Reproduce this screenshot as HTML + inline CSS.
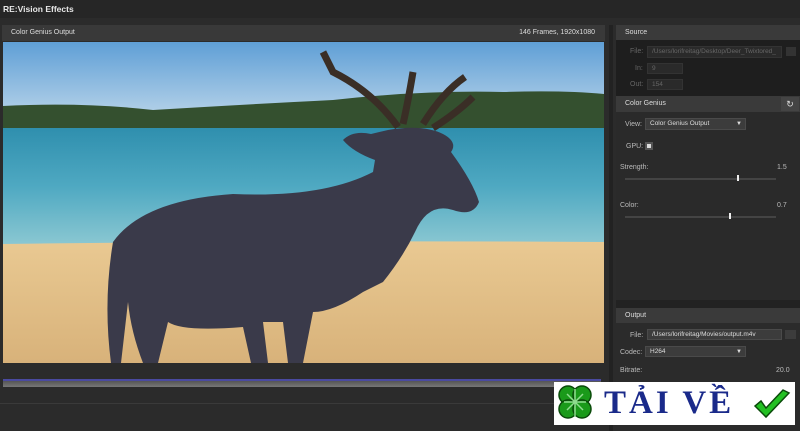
<!DOCTYPE html><html><head><style>
*{margin:0;padding:0;box-sizing:border-box}
body{width:800px;height:431px;background:#2b2b2b;font-family:"Liberation Sans",sans-serif;position:relative;overflow:hidden;color:#ccc;font-size:7px}
.a{position:absolute}
.hdr{background:#3a3a3a;color:#ddd;font-size:7px;padding-left:9px;line-height:15px}
.fld{background:#3c3c3c;border:1px solid #4a4a4a;color:#ddd;font-size:6.5px;line-height:10px;padding-left:4px}
.lbl{color:#bbb;font-size:7px}
</style></head><body>
<div class="a" style="left:0;top:0;width:800px;height:18px;background:#262626"></div>
<div class="a" style="left:3px;top:4px;font-weight:bold;font-size:8.5px;color:#e8e8e8">RE:Vision Effects</div>
<div class="a hdr" style="left:2px;top:25px;width:603px;height:16px;background:#393939">Color Genius Output<span style="float:right;padding-right:10px">146 Frames, 1920x1080</span></div>
<svg class="a" style="left:3px;top:42px" width="601" height="321" viewBox="0 0 601 321">
<defs><linearGradient id="s" x1="0" y1="0" x2="0" y2="1"><stop offset="0" stop-color="#5f9fd6"/><stop offset="1" stop-color="#bcd6ea"/></linearGradient>
<linearGradient id="w" x1="0" y1="0" x2="0" y2="1"><stop offset="0" stop-color="#2f8fae"/><stop offset="0.5" stop-color="#4fa9c2"/><stop offset="1" stop-color="#8cc8d2"/></linearGradient>
<linearGradient id="d" x1="0" y1="0" x2="0" y2="1"><stop offset="0" stop-color="#e9c992"/><stop offset="1" stop-color="#d8b27a"/></linearGradient></defs>
<rect width="601" height="80" fill="url(#s)"/>
<path d="M0 64 Q80 60 150 68 Q250 62 330 58 Q420 48 500 50 Q560 48 601 52 L601 88 L0 88Z" fill="#34502f"/>
<rect y="86" width="601" height="118" fill="url(#w)"/>
<path d="M0 202 Q300 198 601 200 L601 321 L0 321Z" fill="url(#d)"/>
<path d="M110 200 Q140 158 230 152 Q320 156 370 130 L372 118 Q350 110 340 98 Q350 88 368 92 L385 88 Q420 82 440 92 Q455 100 448 110 Q470 140 476 160 Q470 175 450 168 Q425 160 412 190 Q400 215 380 240 L360 250 Q330 270 310 270 L300 321 L285 321 L280 280 L260 280 L265 321 L248 321 L240 285 Q180 290 165 280 L155 321 L140 321 Q128 290 125 260 L118 321 L108 321 Q100 260 110 200Z" fill="#3a3a4a"/>
<path d="M395 85 Q370 50 330 30 L320 10 M400 82 Q405 60 410 30 M420 82 Q440 50 462 35 M430 86 Q455 70 470 55" stroke="#3a2e26" stroke-width="7" fill="none"/>
</svg>
<div class="a" style="left:3px;top:379px;width:598px;height:8px;background:linear-gradient(#555,#777);border-top:2px solid #4a4aa0"></div>
<div class="a" style="left:0;top:403px;width:600px;height:1px;background:#3a3a3a"></div>
<div class="a" style="left:609px;top:25px;width:4px;height:406px;background:#222"></div>
<div class="a hdr" style="left:616px;top:25px;width:184px;height:15px">Source</div>
<div class="a" style="left:616px;top:40px;width:184px;height:56px;background:#1e1e1e"></div>
<div class="a lbl" style="left:630px;top:48px;color:#666">File:</div>
<div class="a fld" style="left:647px;top:46px;width:135px;height:12px;background:#2a2a2a;border-color:#333;color:#666">/Users/lorifreitag/Desktop/Deer_Twixtored_</div>
<div class="a" style="left:786px;top:47px;width:10px;height:9px;background:#333"></div>
<div class="a lbl" style="left:635px;top:65px;color:#666">In:</div>
<div class="a fld" style="left:647px;top:63px;width:36px;height:11px;background:#2a2a2a;border-color:#333;color:#666">9</div>
<div class="a lbl" style="left:630px;top:81px;color:#666">Out:</div>
<div class="a fld" style="left:647px;top:79px;width:36px;height:11px;background:#2a2a2a;border-color:#333;color:#666">154</div>
<div class="a hdr" style="left:616px;top:96px;width:184px;height:16px">Color Genius</div>
<div class="a" style="left:781px;top:97px;width:18px;height:14px;background:#444;color:#ddd;font-size:9px;text-align:center;line-height:14px">↻</div>
<div class="a" style="left:616px;top:112px;width:184px;height:196px;background:#2a2a2a"></div>
<div class="a lbl" style="left:625px;top:121px">View:</div>
<div class="a fld" style="left:645px;top:118px;width:101px;height:12px">Color Genius Output<span style="float:right;padding-right:3px;font-size:6px">▼</span></div>
<div class="a lbl" style="left:626px;top:143px">GPU:</div>
<div class="a" style="left:645px;top:142px;width:8px;height:8px;background:#ddd;border:2px solid #555"></div>
<div class="a lbl" style="left:620px;top:164px">Strength:</div><div class="a lbl" style="left:777px;top:164px">1.5</div>
<div class="a" style="left:625px;top:178px;width:151px;height:2px;background:#444"></div>
<div class="a" style="left:737px;top:175px;width:2px;height:6px;background:#eee"></div>
<div class="a lbl" style="left:620px;top:202px">Color:</div><div class="a lbl" style="left:777px;top:202px">0.7</div>
<div class="a" style="left:625px;top:216px;width:151px;height:2px;background:#444"></div>
<div class="a" style="left:729px;top:213px;width:2px;height:6px;background:#eee"></div>
<div class="a" style="left:616px;top:300px;width:184px;height:8px;background:#222"></div>
<div class="a hdr" style="left:616px;top:308px;width:184px;height:15px">Output</div>
<div class="a lbl" style="left:630px;top:332px">File:</div>
<div class="a fld" style="left:647px;top:329px;width:135px;height:11px">/Users/lorifreitag/Movies/output.m4v</div>
<div class="a" style="left:785px;top:330px;width:11px;height:9px;background:#3c3c3c"></div>
<div class="a lbl" style="left:620px;top:349px">Codec:</div>
<div class="a fld" style="left:645px;top:346px;width:101px;height:11px">H264<span style="float:right;padding-right:3px;font-size:6px">▼</span></div>
<div class="a lbl" style="left:620px;top:367px">Bitrate:</div><div class="a lbl" style="left:776px;top:367px">20.0</div>
<div class="a" style="left:554px;top:382px;width:241px;height:43px;background:#fff"></div>
<svg class="a" style="left:556px;top:383px" width="38" height="40" viewBox="0 0 38 40"><g fill="#1a9a1a" stroke="#0a4a0a" stroke-width="1.5"><circle cx="12" cy="12" r="9"/><circle cx="26" cy="12" r="9"/><circle cx="12" cy="26" r="9"/><circle cx="26" cy="26" r="9"/></g><path d="M19 6V34M8 19H30M11 11L27 27M27 11L11 27" stroke="#8fdc8f" stroke-width="1.5"/></svg>
<div class="a" style="left:604px;top:382px;font-family:'Liberation Serif',serif;font-weight:bold;font-size:33px;letter-spacing:3px;color:#1a2a8a;line-height:43px">TẢI VỀ</div>
<svg class="a" style="left:752px;top:388px" width="40" height="34" viewBox="0 0 40 34"><path d="M3 18L14 29L37 5L31 2L14 20L9 13Z" fill="#22c022" stroke="#0a4a0a" stroke-width="1.5"/></svg>
</body></html>
